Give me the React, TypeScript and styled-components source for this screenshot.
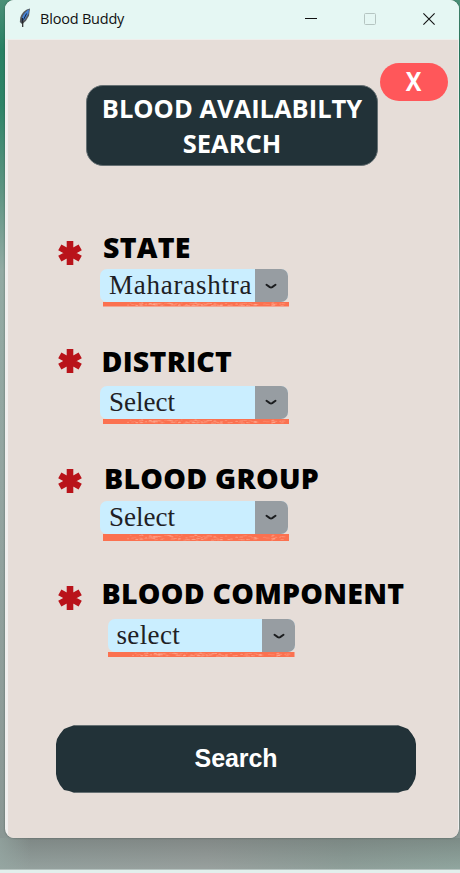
import React from 'react';
import styled, { createGlobalStyle } from 'styled-components';

const GlobalStyle = createGlobalStyle`
  * { box-sizing: border-box; }
  body { margin: 0; overflow: hidden; }
  button { border: 0; padding: 0; font: inherit; cursor: pointer; }
`;

const Desktop = styled.div`
  width: 460px;
  height: 873px;
  overflow: hidden;
  padding-left: 5px;
  background:
    linear-gradient(#b5c2bf, #b5c2bf) 0 869px / 100% 1px no-repeat,
    linear-gradient(#e2efec, #e2efec) 0 870px / 100% 3px no-repeat,
    linear-gradient(90deg, rgba(150, 168, 163, 0.7), rgba(150, 168, 163, 0) 30px) 0 838px / 100% 31px no-repeat,
    linear-gradient(rgba(110, 115, 113, 0.5), rgba(170, 178, 174, 0.2)) 0 838px / 100% 31px no-repeat,
    linear-gradient(90deg, #8d9c99, #949c9a 45%, #879a94 75%, #8aa39b) 0 838px / 100% 31px no-repeat,
    linear-gradient(#4a9077 0, #278063 50px, #2d8467 105px, #5d9482 190px, #92aaa3 270px, #93a5a1 480px, #8a9794 838px);
`;

const Window = styled.main`
  width: 454px;
  height: 838px;
  display: flex;
  flex-direction: column;
  overflow: hidden;
  border-radius: 9px;
  background: #f0efee;
  box-shadow: 0 0 2px rgba(40, 55, 50, 0.6);
`;

const TitleBar = styled.header`
  height: 40px;
  flex: none;
  display: flex;
  align-items: flex-start;
  background: #e5f7f3;
  border-bottom: 1px solid #efefec;
  padding: 8px 24px 0 13px;
`;

const Caption = styled.span`
  flex: 1;
  margin: 0 0 0 8px;
  font: 14.5px/22px "Open Sans", "Noto Sans", sans-serif;
  letter-spacing: -0.2px;
  color: #111;
`;

const WindowActions = styled.div`
  display: flex;
  gap: 47px;
  padding-top: 5px;
  svg { display: block; }
`;

const Content = styled.section`
  flex: 1;
  margin: 0 1px 0 3px;
  background: #e6ddd8;
`;

const Top = styled.div`
  display: flex;
  align-items: flex-start;
  height: 188px;
`;

const Heading = styled.h1`
  width: 292px;
  height: 81px;
  margin: 45px 0 0 78px;
  padding-top: 5px;
  border: 1px solid #667073;
  border-radius: 17px;
  background: #223238;
  color: #fff;
  text-align: center;
  white-space: nowrap;
  font: 700 25.5px/35px "Open Sans", sans-serif;
`;

const ExitButton = styled.button`
  width: 68px;
  height: 37.5px;
  margin: 23px 0 0 2px;
  border-radius: 19px;
  background: #ff575a;
  color: #fff;
  font: 700 26px/37px "Open Sans", sans-serif;
`;

const ExitMark = styled.span`
  display: inline-block;
  transform: scaleX(0.9);
`;

const Field = styled.div<{ $height: number }>`
  height: ${p => p.$height}px;
  display: grid;
  grid-template-columns: 42px 1fr;
  grid-template-rows: 40px auto;
  align-content: start;
  padding-left: 50px;
`;

const StarSlot = styled.span<{ $drop: number }>`
  padding-top: ${p => 8 + p.$drop}px;
  svg { display: block; }
`;

const Label = styled.label<{ $indent: number }>`
  padding-left: ${p => p.$indent}px;
  font: 800 28.5px/38px "Open Sans", sans-serif;
  letter-spacing: 0.25px;
  color: #000;
  white-space: nowrap;
`;

const Picker = styled.div<{ $gap: number; $indent: number }>`
  grid-column: 2;
  width: 190px;
  margin: ${p => p.$gap}px 0 0 ${p => p.$indent}px;
`;

const Combo = styled.div`
  display: flex;
  width: 187.5px;
  height: 33px;
  overflow: hidden;
  border-radius: 7px;
  background: #caeeff;
`;

const Value = styled.span<{ $spacing: number }>`
  flex: 1;
  padding-left: 9px;
  font: 27px/33px "Liberation Serif", serif;
  letter-spacing: ${p => p.$spacing}px;
  color: #202024;
  white-space: nowrap;
`;

const Arrow = styled.button`
  width: 33px;
  display: grid;
  place-items: center;
  background: #979da2;
`;

const Stroke = styled.svg<{ $shift: number }>`
  display: block;
  margin-left: ${p => p.$shift}px;
`;

const SearchButton = styled.button`
  display: block;
  width: 360px;
  height: 68px;
  margin-left: 48px;
  padding-bottom: 2px;
  background: #223238;
  color: #fff;
  font: 700 25px/64px "Liberation Sans", Arial, sans-serif;
  letter-spacing: -0.1px;
  border-top: 1px solid #667073;
  border-bottom: 1px solid #667073;
  clip-path: polygon(0 19px, 1px 14px, 4px 9px, 8px 4px, 13px 2px, 19px 0, 341px 0, 347px 2px, 352px 4px, 356px 9px, 359px 14px, 360px 19px, 360px 49px, 359px 54px, 356px 60px, 352px 65px, 347px 66px, 341px 68px, 19px 68px, 13px 66px, 8px 65px, 4px 60px, 1px 54px, 0 49px);
`;

const Feather = () => (
  <svg width="14" height="20" viewBox="0 0 14 20">
    <path d="M12 .5C7.5 1.2 3.8 5 2.3 9.5L1.8 14l2.4 2.2L8 12.7l3-5z" fill="#55595d" />
    <path d="M11 1.6C8 3 5 6.5 4 10.5L6.5 12l4-6.5z" fill="#4585d8" />
    <path d="M8.6 5.5 5.6 11.5" stroke="#14233c" strokeWidth="1" fill="none" />
    <path d="M4.4 10v5" stroke="#15233b" strokeWidth="1.2" />
    <path d="M4.7 13v6" stroke="#292929" strokeWidth="1.2" />
  </svg>
);

const Star = () => (
  <svg width="24" height="24" viewBox="0 0 24 24">
    <g stroke="#b9131a" strokeWidth="6.6">
      <path d="M12 0v24M1.8 6.4l20.4 11.2M22.2 6.4 1.8 17.6" />
    </g>
  </svg>
);

const grain = (n: number) => {
  const v = Math.sin(n * 12.9898) * 43758.5453;
  return v - Math.floor(v);
};

const Underline = ({ width, height, shift }: { width: number; height: number; shift: number }) => (
  <Stroke $shift={shift} width={width} height={height}>
    <rect width={width} height={height} fill="#fb7150" />
    {Array.from({ length: 110 }, (_, i) => (
      <ellipse
        key={i}
        cx={25 + grain(i + 1) * (width - 30)}
        cy={0.8 + grain(i + 301) * (height - 1.6)}
        rx={0.8 + grain(i + 601) * 1.6}
        ry="0.5"
        fill="#ffb49c"
        opacity={0.25 + grain(i + 901) * 0.4}
      />
    ))}
  </Stroke>
);

type FieldData = {
  label: string; value: string; height: number; drop: number; labelIndent: number;
  valueSpacing: number; gap: number; indent: number; line: number; lineShift: number;
};

const fields: FieldData[] = [
  { label: 'STATE', value: 'Maharashtra', height: 114, drop: 5, labelIndent: 3, valueSpacing: 0.75, gap: 1, indent: 0, line: 4.5, lineShift: 2.5 },
  { label: 'DISTRICT', value: 'Select', height: 117, drop: -1, labelIndent: 1.5, valueSpacing: 0, gap: 3.5, indent: 0, line: 5, lineShift: 2.5 },
  { label: 'BLOOD GROUP', value: 'Select', height: 115, drop: 2, labelIndent: 4, valueSpacing: 0, gap: 1.5, indent: 0, line: 7, lineShift: 2.5 },
  { label: 'BLOOD COMPONENT', value: 'select', height: 151, drop: 4, labelIndent: 1.5, valueSpacing: 0.35, gap: 5, indent: 7.5, line: 5, lineShift: 0.5 },
];

export default function App() {
  return (
    <>
      <GlobalStyle />
      <Desktop>
        <Window>
          <TitleBar>
            <Feather />
            <Caption>Blood Buddy</Caption>
            <WindowActions>
              <svg width="12" height="12"><path d="M0 5.5h12" stroke="#111" /></svg>
              <svg width="12" height="12"><rect x=".5" y=".5" width="11" height="11" rx="1" fill="none" stroke="#b5c5c1" /></svg>
              <svg width="12" height="12"><path d="m.4.4 11.2 11.2M11.6.4.4 11.6" stroke="#111" strokeWidth="1.1" /></svg>
            </WindowActions>
          </TitleBar>
          <Content>
            <Top>
              <Heading>BLOOD AVAILABILTY<br />SEARCH</Heading>
              <ExitButton><ExitMark>X</ExitMark></ExitButton>
            </Top>
            {fields.map(f => (
              <Field key={f.label} $height={f.height}>
                <StarSlot $drop={f.drop}><Star /></StarSlot>
                <Label $indent={f.labelIndent}>{f.label}</Label>
                <Picker $gap={f.gap} $indent={f.indent}>
                  <Combo>
                    <Value $spacing={f.valueSpacing}>{f.value}</Value>
                    <Arrow aria-label={`Choose ${f.label.toLowerCase()}`}>
                      <svg width="12" height="8" viewBox="0 0 12 8">
                        <path d="M1.5 2.8 4.8 5.1Q6 5.8 7.2 5.1L10.5 2.8" fill="none" stroke="#1b1d1f" strokeWidth="2" strokeLinecap="round" />
                      </svg>
                    </Arrow>
                  </Combo>
                  <Underline width={186.5} height={f.line} shift={f.lineShift} />
                </Picker>
              </Field>
            ))}
            <SearchButton>Search</SearchButton>
          </Content>
        </Window>
      </Desktop>
    </>
  );
}
